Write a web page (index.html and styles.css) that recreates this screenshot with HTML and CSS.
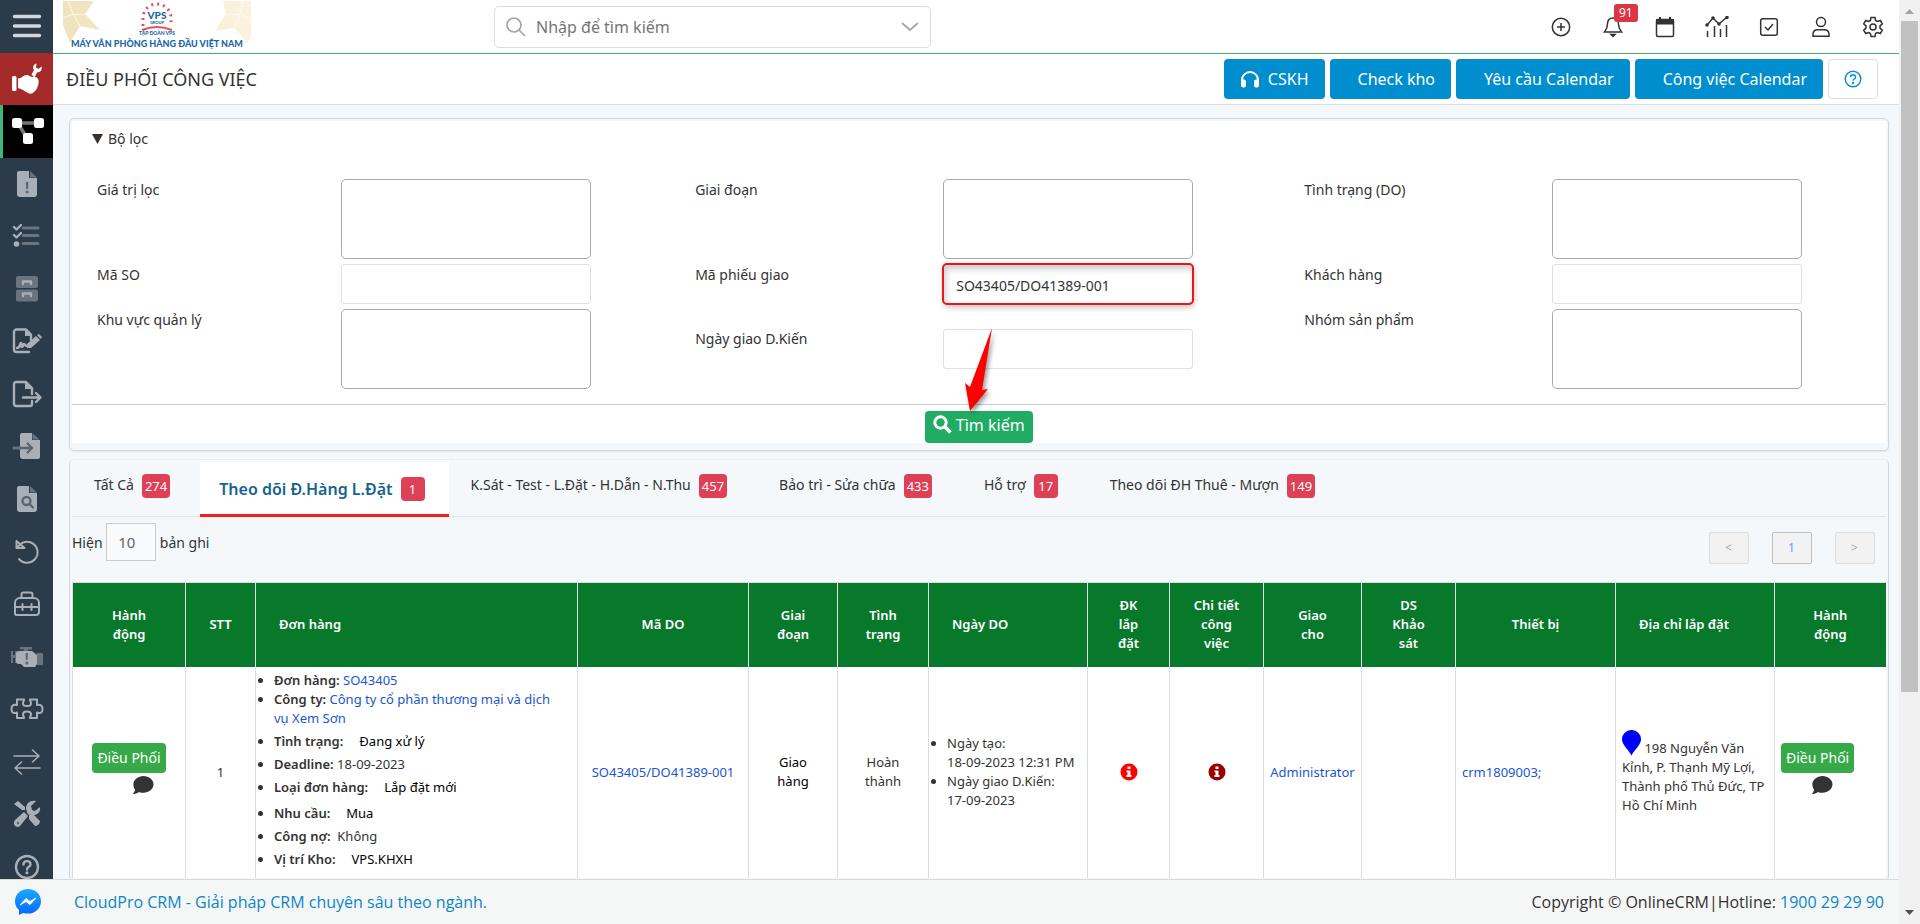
FILE: index.html
```html
<!DOCTYPE html>
<html lang="vi">
<head>
<meta charset="utf-8">
<title>Điều phối công việc</title>
<link rel="stylesheet" href="styles.css">
</head>
<body>
<div class="window">
<div class="page">
  <div class="workspace">
    <nav class="sidebar" aria-label="Menu chính">
      <div class="sidebar-list">
        <button class="side-item menu" aria-label="Menu"><svg width="30" height="26" viewBox="0 0 30 26"><path d="M2.500 3.500h25M2.500 13h25M2.500 22.500h25" stroke="#d3d6da" stroke-width="3.400" stroke-linecap="round"/></svg></button>
        <a class="side-item module" href="#" aria-label="Dịch vụ"><svg width="34" height="34" viewBox="0 0 34 34" fill="#fff"><rect x="2" y="14" width="4.500" height="15" rx="1.500"/><path d="M8 16.500c4 0 5-3.500 9-3.500 2 0 3 2 6 2 2-.5 4 .5 5 2 1.500 2 0 3.500.5 5-.5 2-1 3-1.500 4-.5 2-2 3-3 4-1.500 2-4 2-6 1-3-1.500-6-4-10-5z"/><path d="M21.500 12.500l2.500-4.500c-2-3 0-6 2.500-6.500l-.5 4 2.500 1.500 3-2.500c1 3-1 6-4.500 6l-2.500 5z"/></svg></a>
        <a class="side-item active" href="#" aria-label="Điều phối"><svg width="34" height="28" viewBox="0 0 34 28"><path d="M10 6h16M8 8l8 13" stroke="#777" stroke-width="3.500"/><g fill="#fff"><rect x="1" y="1" width="10" height="10" rx="2.500"/><rect x="23" y="1" width="10" height="10" rx="2.500"/><rect x="12" y="16" width="10" height="11" rx="2.500"/></g></svg></a>
        <a class="side-item" href="#" aria-label="Cảnh báo"><svg width="22" height="28" viewBox="0 0 22 28"><path class="p" d="M3 1h10v7h8v16a3 3 0 0 1-3 3H4a3 3 0 0 1-3-3V3a2 2 0 0 1 2-2z"/><path class="s" d="M14 1l7 6.500h-7z"/><path class="d" d="M9.800 12h2.600l-.4 7h-1.800z"/><circle class="d" cx="11.100" cy="22" r="1.500"/></svg></a>
        <a class="side-item" href="#" aria-label="Danh sách"><svg width="30" height="26" viewBox="0 0 30 26"><path class="sl" d="M11 5h15M11 12.500h15M11 20.500h15" stroke-width="3.500"/><path class="pl" d="M2 4l2.500 2.500L9 2M2 12l2.500 2.500L9 10" stroke-width="2.800"/><circle class="p" cx="4.500" cy="21" r="2.800"/></svg></a>
        <a class="side-item" href="#" aria-label="Kho"><svg width="24" height="28" viewBox="0 0 24 28"><rect class="s" x="1" y="1" width="22" height="12" rx="2"/><rect class="s" x="1" y="14.500" width="22" height="12" rx="2"/><path class="pl" d="M8 9V6.500h8V9M8 21v-2.500h8V21"/></svg></a>
        <a class="side-item" href="#" aria-label="Hợp đồng"><svg class="wide" width="30" height="28" viewBox="0 0 30 28"><path class="pl" d="M17 25H4.500A2.500 2.500 0 0 1 2 22.500V5a2.500 2.500 0 0 1 2.500-2.500H14l5 5V13M5 21c3 0 3-5 4-5s0 4 1 4 1-3 2-3 1 2 3 2"/><path class="p" d="M13 2v7h7zM15 21v-4l9-8 4 4-9 8zM25 8l2-1 3 3-1.500 2z"/></svg></a>
        <a class="side-item" href="#" aria-label="Xuất"><svg width="30" height="28" viewBox="0 0 30 28"><path class="pl" d="M20 21v3a2 2 0 0 1-2 2H4a2 2 0 0 1-2-2V4a2 2 0 0 1 2-2h10l6 6v6" stroke-width="2.600"/><path class="p" d="M13 2v7h7z"/><path class="pl" d="M11 17.500h17M24 13l4.500 4.500L24 22"/></svg></a>
        <a class="side-item" href="#" aria-label="Nhập"><svg width="30" height="28" viewBox="0 0 30 28"><path class="p" d="M10 1h10v7h8v17a2 2 0 0 1-2 2H11a3 3 0 0 1-3-3V3a2 2 0 0 1 2-2z"/><path class="s" d="M20.500 1l7 6.500h-7z"/><path class="dl" d="M8 16h12M15.500 11.500L20 16l-4.500 4.500"/><path class="sl" d="M2 16h5"/></svg></a>
        <a class="side-item" href="#" aria-label="Tra cứu"><svg width="22" height="28" viewBox="0 0 22 28"><path class="p" d="M3 1h10v7h8v16a3 3 0 0 1-3 3H4a3 3 0 0 1-3-3V3a2 2 0 0 1 2-2z"/><path class="s" d="M14 1l7 6.500h-7z"/><circle class="dl" cx="10.500" cy="16" r="4"/><path class="dl" d="M13.500 19l3.500 3.500"/></svg></a>
        <a class="side-item" href="#" aria-label="Hoàn tác"><svg width="26" height="26" viewBox="0 0 26 26"><path class="pl thin" d="M4 8A10.500 10.500 0 1 1 5 20M2.500 2v7h8L2.500 2"/></svg></a>
        <a class="side-item" href="#" aria-label="Công cụ"><svg width="28" height="26" viewBox="0 0 28 26"><path class="pl thin" d="M8.500 7V3.500a2 2 0 0 1 2-2h7a2 2 0 0 1 2 2V7M2 23V12a5 5 0 0 1 5-5h14a5 5 0 0 1 5 5v9a3 3 0 0 1-3 3H4a2 2 0 0 1-2-1zM2 16h24M9.500 13v6M18.500 13v6"/></svg></a>
        <a class="side-item" href="#" aria-label="Máy móc"><svg width="34" height="24" viewBox="0 0 34 24"><path class="s" d="M1 6h2v4h2V6h2v12H5v-5H3v5H1zM10 2h12v2.500h-4V6h-4V4.500h-4zM27 8h5a1 1 0 0 1 1 1v11h-6z"/><path class="p" d="M8 6h14l5 4v9l-2 3H14l-3-3H8a3 3 0 0 1-2-3v-7a3 3 0 0 1 2-3z"/><path class="d" d="M15.500 8h2.500l-.4 7h-1.700z"/><circle class="d" cx="16.800" cy="18" r="1.500"/></svg></a>
        <a class="side-item" href="#" aria-label="Mô-đun"><svg width="34" height="22" viewBox="0 0 34 22"><path class="pl thin" d="M7 1.500h7c0 2-1 2-1 4s1.500 2.500 4 2.500 4-.5 4-2.500-1-2-1-4h7V7c4-1 5.500 1 5.500 4S31 16 27 14.500v5.500h-7c0-2 1-2 1-3.500 0-2-1.500-3-4-3s-4 1-4 3c0 1.500 1 1.500 1 3.500H7v-5.500C3 16 1.500 14 1.500 11S3 6 7 7z"/></svg></a>
        <a class="side-item" href="#" aria-label="Chuyển đổi"><svg width="30" height="26" viewBox="0 0 30 26"><path class="pl hair" d="M2 7h25M20.500 1L27 7l-6.500 6M28 19H3M9.500 13L3 19l6.500 6"/></svg></a>
        <a class="side-item" href="#" aria-label="Sửa chữa"><svg width="28" height="28" viewBox="0 0 28 28"><path class="p" d="M1 4l4-3 7 6v3l5 5 3-1 7 7c0 3-3 5-5 5l-6-7v-4l-4-5H9zM2 20l9-8 4 4-8 10c-4 3-8-2-5-6z"/><path class="p" d="M13 9c0-6 4-9 10-8l-5 5 1 4 3 1 5-4c1 5-3 9-9 8l-3-1z"/><circle class="d" cx="5" cy="23" r="1.200"/></svg></a>
        <a class="side-item" href="#" aria-label="Trợ giúp"><svg width="26" height="26" viewBox="0 0 26 26"><circle class="pl" cx="13" cy="13" r="11"/><path class="pl" d="M9.500 10.500c0-4.500 7-4.500 7 0 0 2.500-3.500 2-3.500 5"/><circle class="p" cx="13" cy="18.800" r="1.600"/></svg></a>
      </div>
    </nav>

    <main class="main">
      <header class="topbar">
        <a class="logo" href="#" aria-label="VPS Group">
          <svg width="188" height="48" viewBox="0 0 188 48">
            <defs><linearGradient id="gold" x1="0" x2="1"><stop offset="0" stop-color="#efe2bd"/><stop offset="1" stop-color="#fbf3df"/></linearGradient></defs>
            <path fill="url(#gold)" d="M0 0h31l-9 13 15 16-20-4-10 17L0 24zM188 0h-28l3 13-11 17 20-3 12 16 4-8z"/>
            <path d="M0 17l10-4L5 0M10 13l12 1M10 13l7 12M188 18l-11-5 3-13M177 13l-14 1M177 13l-5 14" stroke="#fffaf0" fill="none"/>
            <path d="M80 25v-8a14 14 0 0 1 28 0v8" fill="none" stroke="#e05561" stroke-width="3" stroke-dasharray="2 4"/>
            <path d="M79 29q15-6 30 0" fill="none" stroke="#e05561" stroke-width="2"/>
            <g fill="#1b67a6" text-anchor="middle" font-family="Lato, sans-serif" font-weight="900">
              <text x="94" y="18" font-size="10">VPS</text><text x="94" y="23" font-size="4">GROUP</text>
              <text x="94" y="34" font-size="5">TẬP ĐOÀN VPS</text><text x="94" y="46" font-size="9">MÁY VĂN PHÒNG HÀNG ĐẦU VIỆT NAM</text>
            </g>
          </svg>
        </a>
        <div class="search">
          <svg width="20" height="20" viewBox="0 0 20 20"><circle cx="8" cy="8" r="7" fill="none" stroke="#a5a5a5" stroke-width="1.700"/><path d="M13 13l6 6" stroke="#a5a5a5" stroke-width="1.700"/></svg>
          <input type="text" aria-label="Tìm kiếm" placeholder="Nhập để tìm kiếm">
          <svg width="18" height="12" viewBox="0 0 18 12"><path d="M1 2l8 7 8-7" fill="none" stroke="#a5a5a5" stroke-width="1.800"/></svg>
        </div>
        <div class="tools">
          <button aria-label="Thêm"><svg width="22" height="22" viewBox="0 0 22 22"><circle cx="11" cy="11" r="8.700"/><path d="M11 7v8M7 11h8"/></svg></button>
          <button class="bell" aria-label="Thông báo"><svg width="22" height="22" viewBox="0 0 22 22"><path d="M11 2c-4 0-5.500 3-5.500 6 0 4-1 5.500-3 8h17c-2-2.500-3-4-3-8 0-3-1.500-6-5.500-6z"/><path d="M9 18.500h4l-2 2z" fill="#333"/></svg><span class="count">91</span></button>
          <button aria-label="Lịch"><svg width="22" height="22" viewBox="0 0 22 22"><rect x="2.500" y="3.500" width="17" height="17" rx="1.500"/><path d="M3 4h16v3.500H3zM6 1v3M16 1v3" fill="#333" stroke-width="2"/></svg></button>
          <button aria-label="Báo cáo"><svg width="24" height="22" viewBox="0 0 24 22"><path d="M2.500 21v-6M9.500 21V10M15.500 21v-8M21.500 21V9M2 9l6-7 6 6 8-7"/><g fill="#333"><circle cx="8" cy="2" r="1"/><circle cx="14" cy="8" r="1"/><circle cx="22" cy="1.500" r="1"/><circle cx="2" cy="9" r="1"/></g></svg></button>
          <button aria-label="Công việc"><svg width="22" height="22" viewBox="0 0 22 22"><rect x="2.700" y="2.700" width="16.600" height="16.600" rx="2"/><path d="M7 11l3 3 5-6"/></svg></button>
          <button aria-label="Tài khoản"><svg width="22" height="22" viewBox="0 0 22 22"><circle cx="11" cy="6" r="4.500"/><path d="M3 20.300v-2c0-3 2-4.500 5-4.500h6c3 0 5 1.500 5 4.500v2z"/></svg></button>
          <button aria-label="Cài đặt"><svg width="22" height="22" viewBox="0 0 22 22"><circle cx="11" cy="11" r="3"/><path d="M9 1.500h4l.6 3 1.800 1 2.900-1 2 3.400-2.300 2v2.200l2.300 2-2 3.400-2.900-1-1.800 1-.6 3H9l-.6-3-1.800-1-2.900 1-2-3.400 2.300-2V9.900l-2.300-2 2-3.400 2.900 1 1.800-1z"/></svg></button>
        </div>
      </header>

      <div class="titlebar">
        <h1>ĐIỀU PHỐI CÔNG VIỆC</h1>
        <div class="actions">
          <button class="blue cskh"><svg width="20" height="18" viewBox="0 0 20 18"><path d="M2 14V10a8 8 0 0 1 16 0v4" fill="none" stroke="#fff" stroke-width="2"/><rect x="1" y="9.500" width="5" height="8" rx="2" fill="#fff"/><rect x="14" y="9.500" width="5" height="8" rx="2" fill="#fff"/></svg>CSKH</button>
          <button class="blue">Check kho</button>
          <button class="blue">Yêu cầu Calendar</button>
          <button class="blue">Công việc Calendar</button>
          <button class="help" aria-label="Trợ giúp"><svg width="18" height="18" viewBox="0 0 18 18" fill="none" stroke="#0b8fd0" stroke-width="1.500"><circle cx="9" cy="9" r="7.800"/><path d="M6.500 7.300c0-3.300 5-3.300 5 0 0 1.700-2.500 1.700-2.500 3.400"/><circle cx="9" cy="13" r=".5"/></svg></button>
        </div>
      </div>

      <div class="content">
        <section class="panel filter">
          <details open>
            <summary><svg width="11" height="10" viewBox="0 0 11 10"><path d="M0 0h11L5.500 10z" fill="#333"/></svg>Bộ lọc</summary>
            <form class="fields" id="filter">
              <label for="f1">Giá trị lọc</label><div><textarea id="f1"></textarea></div>
              <label for="f2">Giai đoạn</label><div><textarea id="f2"></textarea></div>
              <label for="f3">Tình trạng (DO)</label><div><textarea id="f3"></textarea></div>
              <label for="f4">Mã SO</label><div><input id="f4" type="text"></div>
              <label for="f5">Mã phiếu giao</label><div class="marked"><input id="f5" type="text" value="SO43405/DO41389-001"></div>
              <label for="f6">Khách hàng</label><div><input id="f6" type="text"></div>
              <label for="f7">Khu vực quản lý</label><div><textarea id="f7"></textarea></div>
              <label class="mid" for="f8">Ngày giao D.Kiến</label><div class="mid"><input id="f8" type="text"></div>
              <label for="f9">Nhóm sản phẩm</label><div><textarea id="f9"></textarea></div>
            </form>
            <div class="submit">
              <button class="find" type="submit" form="filter"><svg width="19" height="19" viewBox="0 0 19 19"><circle cx="7.500" cy="7.500" r="5.700" fill="none" stroke="#fff" stroke-width="3"/><path d="M11.500 11.500l6 6" stroke="#fff" stroke-width="3.600"/></svg>Tìm kiếm</button>
              <svg class="arrow" width="40" height="90" viewBox="0 0 40 90"><path d="M33 2L23 64l6-1L11 85 6 57l5 4z" fill="red"/></svg>
            </div>
          </details>
        </section>

        <section class="panel results">
          <div class="tabs">
            <button>Tất Cả<span class="badge">274</span></button>
            <button class="current">Theo dõi Đ.Hàng L.Đặt<span class="badge">1</span></button>
            <button>K.Sát - Test - L.Đặt - H.Dẫn - N.Thu<span class="badge">457</span></button>
            <button>Bảo trì - Sửa chữa<span class="badge">433</span></button>
            <button>Hỗ trợ<span class="badge">17</span></button>
            <button>Theo dõi ĐH Thuê - Mượn<span class="badge">149</span></button>
          </div>
          <div class="listbar">
            <label class="length">Hiện <input type="text" value="10"> bản ghi</label>
            <div class="pager"><button disabled>&lt;</button><button class="on">1</button><button disabled>&gt;</button></div>
          </div>
          <table class="grid">
            <colgroup><col class="c1"><col class="c2"><col class="c3"><col class="c4"><col class="c5"><col class="c6"><col class="c7"><col class="c8"><col class="c9"><col class="c10"><col class="c11"><col class="c12"><col class="c13"><col class="c14"></colgroup>
            <thead><tr>
              <th>Hành<br>động</th><th>STT</th><th class="left">Đơn hàng</th><th>Mã DO</th><th>Giai<br>đoạn</th><th>Tình<br>trạng</th><th class="left">Ngày DO</th><th>ĐK<br>lắp<br>đặt</th><th>Chi tiết<br>công<br>việc</th><th>Giao<br>cho</th><th>DS<br>Khảo<br>sát</th><th>Thiết bị</th><th class="left">Địa chỉ lắp đặt</th><th>Hành<br>động</th>
            </tr></thead>
            <tbody><tr>
              <td><button class="assign">Điều Phối</button><svg class="chat first" width="22" height="18" viewBox="0 0 22 18"><path d="M11.500 0C17 0 21.500 3.700 21.500 8.300s-4.500 8.500-10 8.500c-1.700 0-3.200-.3-4.600-.9C5.300 17.200 3 18 .8 18c1.200-1.200 2-2.800 2.200-4.300-1-1.500-1.600-3.400-1.600-5.400C1.400 3.700 6 0 11.500 0z" fill="#333"/></svg></td>
              <td>1</td>
              <td class="order"><ul>
                <li><b>Đơn hàng:</b> <a href="#">SO43405</a></li>
                <li><b>Công ty:</b> <a href="#">Công ty cổ phần thương mại và dịch vụ Xem Sơn</a></li>
                <li class="pick"><b>Tình trạng:</b><span>Đang xử lý</span></li>
                <li class="plain"><b>Deadline:</b> 18-09-2023</li>
                <li class="pick"><b>Loại đơn hàng:</b><span>Lắp đặt mới</span></li>
                <li class="pick"><b>Nhu cầu:</b><span>Mua</span></li>
                <li class="plain"><b>Công nợ:</b>&nbsp; Không</li>
                <li class="pick"><b>Vị trí Kho:</b><span>VPS.KHXH</span></li>
              </ul></td>
              <td><a href="#">SO43405/DO41389-001</a></td>
              <td class="black">Giao<br>hàng</td>
              <td>Hoàn<br>thành</td>
              <td class="dates"><ul><li>Ngày tạo:<br>18-09-2023 12:31 PM</li><li>Ngày giao D.Kiến:<br>17-09-2023</li></ul></td>
              <td><svg width="18" height="18" viewBox="0 0 18 18"><circle cx="9" cy="9" r="8.500" fill="red"/><path d="M7.500 3.500h3v2.500h-3zM6.500 7.500h4V12h1v2h-5v-2h1V9.300h-1z" fill="#fff"/></svg></td>
              <td><svg width="18" height="18" viewBox="0 0 18 18"><circle cx="9" cy="9" r="8.500" fill="#900"/><path d="M7.500 3.500h3v2.500h-3zM6.500 7.500h4V12h1v2h-5v-2h1V9.300h-1z" fill="#fff"/></svg></td>
              <td><a href="#">Administrator</a></td>
              <td></td>
              <td class="start"><a href="#">crm1809003;</a></td>
              <td class="start"><svg class="pin" width="19" height="26" viewBox="0 0 19 26"><path d="M9.500 0A9.300 9.300 0 0 1 19 9.500C19 15 12 20 9.500 25.500 7 20 0 15 0 9.500A9.300 9.300 0 0 1 9.500 0z" fill="#00f"/></svg> 198 Nguyễn Văn Kỉnh, P. Thạnh Mỹ Lợi, Thành phố Thủ Đức, TP Hồ Chí Minh</td>
              <td class="start"><button class="assign">Điều Phối</button><svg class="chat last" width="22" height="18" viewBox="0 0 22 18"><path d="M11.500 0C17 0 21.500 3.700 21.500 8.300s-4.500 8.500-10 8.500c-1.700 0-3.200-.3-4.600-.9C5.300 17.200 3 18 .8 18c1.200-1.200 2-2.800 2.200-4.300-1-1.500-1.600-3.400-1.600-5.400C1.400 3.700 6 0 11.500 0z" fill="#333"/></svg></td>
            </tr></tbody>
          </table>
        </section>
      </div>
    </main>
  </div>

  <footer class="footer">
    <svg width="26" height="26" viewBox="0 0 26 26"><defs><linearGradient id="msg" x2="0" y2="1"><stop stop-color="#18aaff"/><stop offset="1" stop-color="#0a66ff"/></linearGradient></defs><path d="M13 0C5.700 0 0 5.200 0 12.200c0 3.800 1.500 6.600 4 8.800V26l4-2c1.600.4 3.300.6 5 .6 7.300 0 13-5.300 13-12.400S20.300 0 13 0z" fill="url(#msg)"/><path d="M5 16l6-6.500 4 3 6-3.500-6 6.500-4-3z" fill="#fff" stroke="#fff"/></svg>
    <a href="#">CloudPro CRM - Giải pháp CRM chuyên sâu theo ngành.</a>
    <p>Copyright © OnlineCRM|Hotline: <a href="#">1900 29 29 90</a></p>
  </footer>
</div>
<div class="scroll" aria-hidden="true">
  <svg width="21" height="21" viewBox="0 0 21 21"><path d="M6 14h9l-4.500-5z" fill="#a3a3a3"/></svg>
  <div class="thumb"></div>
  <svg width="21" height="21" viewBox="0 0 21 21"><path d="M6 7h9l-4.500 5z" fill="#505050"/></svg>
</div>
</div>
</body>
</html>
```

FILE: styles.css
```css
* { box-sizing: border-box; }
body {
  margin: 0;
  font: 14px/20px "Noto Sans", "Open Sans", sans-serif;
  color: #333;
  background: #f4f8fb;
}
a { text-decoration: none; color: #0b86c6; }
button, input, textarea { font: inherit; color: inherit; margin: 0; }
svg { display: block; flex: none; }

.window { display: flex; height: 100vh; overflow: hidden; }
.page { flex: 1; min-width: 0; display: flex; flex-direction: column; }
.workspace { flex: 1; min-height: 0; display: flex; overflow: hidden; }

/* Left menu */
.sidebar { flex: none; width: 53px; background: #2c3b49; overflow: hidden; }
.sidebar-list { display: grid; grid-auto-rows: 1fr; height: 893px; }
.side-item {
  display: flex;
  align-items: center;
  justify-content: center;
  border: 0;
  padding: 0;
  background: none;
}
.side-item.module { background: #a52a2a; }
.side-item.active { background: #000; border-left: 3px solid #3cb878; }
.p { fill: #a9afb6; }
.s { fill: #69747f; }
.d { fill: #5c6772; }
.pl, .sl, .dl { fill: none; stroke: #a9afb6; stroke-width: 2.400; stroke-linejoin: round; stroke-linecap: round; }
.sl { stroke: #69747f; stroke-width: 3; }
.dl { stroke: #5c6772; }
.thin { stroke-width: 2; }
.hair { stroke-width: 1.500; }

.main { flex: 1; min-width: 0; }

/* Header */
.topbar {
  display: flex;
  align-items: center;
  height: 54px;
  padding: 0 14px 0 10px;
  background: #fff;
  border-bottom: 1px solid #3cb371;
}
.logo { margin-bottom: 4px; }
.search {
  display: flex;
  align-items: center;
  gap: 10px;
  width: 437px;
  height: 42px;
  margin-left: 243px;
  padding: 0 11px;
  border: 1px solid #ddd;
  border-radius: 5px;
}
.search input { flex: 1; min-width: 0; border: 0; padding: 0; font-size: 16px; outline: 0; }
.search input::placeholder { color: #757575; opacity: 1; }
.tools { display: flex; gap: 28px; margin-left: auto; }
.tools button { position: relative; width: 24px; border: 0; padding: 0; background: none; display: flex; justify-content: center; }
.tools svg { fill: none; stroke: #333; stroke-width: 1.500; }
.count {
  position: absolute;
  left: 13px;
  top: -12px;
  padding: 0 5px;
  font-size: 12px;
  line-height: 18px;
  color: #fff;
  background: #dc3545;
  border-radius: 3px;
}

.titlebar {
  display: flex;
  align-items: center;
  justify-content: space-between;
  height: 51px;
  padding: 0 21px 0 13px;
  background: #fff;
  border-bottom: 1px solid #ddd;
}
h1 { margin: 0; font-size: 18px; line-height: 24px; font-weight: 400; }
.actions { display: flex; gap: 5px; }
.actions button { height: 40px; border-radius: 4px; }
.blue { padding: 0 16px 0 28px; border: 0; color: #fff; background: #008ecf; font-size: 16px; }
.actions .cskh { display: flex; align-items: center; gap: 8px; padding: 0 16px; }
.help { width: 50px; padding: 0 15px; border: 1px solid #ddd; background: #fff; }

/* Panels */
.content { display: grid; gap: 8px; padding: 13px 12px 0 16px; }
.panel { border: 1px solid #d3d6d8; border-radius: 5px; padding: 2px; }
.filter { padding-bottom: 7px; box-shadow: 0 1px 2px #0001; }
details { background: #fff; }
summary { display: flex; align-items: center; gap: 5px; padding: 8px 20px; list-style: none; }
.fields {
  display: grid;
  grid-template-columns: 244fr 354fr 248fr 361fr 248fr 333fr;
  row-gap: 5px;
  padding: 22px 0 15px 25px;
}
.fields > div { display: flex; }
.fields label { padding-top: 1px; }
.fields textarea, .fields input {
  width: 250px;
  border: 1px solid #aaa;
  border-radius: 5px;
  background: #fff;
  resize: none;
}
.fields textarea { height: 80px; }
.fields input { height: 40px; padding: 2px 12px 0; border: 1px solid #e0e0e0; border-radius: 3px; }
.fields .mid { padding-top: 20px; }
.fields .marked input {
  outline: 2px solid #f01418;
  outline-offset: -1px;
  border-radius: 4px;
  box-shadow: 1px 3px 6px #0004, inset 2px 4px 6px #0003;
}
.submit { position: relative; display: flex; justify-content: center; padding-top: 6px; border-top: 1px solid #ccc; }
.find {
  display: flex;
  gap: 4px;
  height: 32px;
  padding: 4px 8px;
  border: 0;
  border-radius: 4px;
  color: #fff;
  background: #22ab63;
  font-size: 16px;
}
.arrow { position: absolute; left: calc(50% - 20px); top: -79px; filter: drop-shadow(2px 3px 2px #0006); }

/* Tabs */
.results { border-top-color: #e9edf0; }
.tabs { display: flex; height: 55px; border-bottom: 1px solid #dfe2e4; }
.tabs button { display: flex; align-items: flex-start; gap: 8px; height: 55px; padding: 11px 30px 0 22px; border: 0; background: none; line-height: 24px; }
.tabs button:not(.current) .badge { margin-top: 1px; }
.badge { padding: 0 3px; min-width: 24px; font-size: 13px; line-height: 24px; color: #fff; background: #de4058; border-radius: 4px; font-weight: 400; }
.tabs .current { padding: 15px 24px 0 19px; font-size: 16px; font-weight: 600; color: #17638f; background: #fff; border-bottom: 3px solid #fb1d1d; }

.listbar { display: flex; justify-content: space-between; height: 65px; padding: 6px 11px 0 0; }
.length input { width: 50px; height: 38px; padding: 0 11px; border: 1px solid #ccc; background: #f8fafc; color: #666; font-size: 15px; }
.pager { display: flex; gap: 23px; padding-top: 9px; }
.pager button { width: 40px; height: 32px; padding: 0; border: 1px solid #ddd; background: #f2f2f2; color: #aaa; font-size: 12px; border-radius: 2px; }
.pager .on { color: #7a90f5; border-color: #c0c0c0; }

/* Orders table */
.grid { width: 100%; table-layout: fixed; border-collapse: collapse; font-size: 13px; line-height: 19px; background: #fff; }
.grid th { height: 84px; padding: 0 8px; color: #fff; background: #08782b; font-weight: 600; border: 1px solid #ddd; border-width: 1px 1px 0; }
.grid th:last-child, .grid td:last-child { border-right: 0; }
.grid .left { text-align: left; padding-left: 23px; }
.grid td { height: 211px; padding: 0 6px; text-align: center; vertical-align: middle; border: 1px solid #ddd; border-width: 0 1px; }
.grid td a { color: #1a56d0; }
.grid td svg { margin: 0 auto; }
.grid .black { color: #000; }
.grid .start, .grid .order, .grid .dates { text-align: left; }
.grid .order { padding: 4px 12px 0 18px; vertical-align: top; }
.grid .dates { padding: 0 4px 0 18px; }
.grid ul { margin: 0; padding: 0; }
.grid b { font-weight: 600; }
.pick { line-height: 26px; }
.pick span { margin-left: 16px; color: #000; }
.plain { line-height: 20px; }
.c1 { width: 113px; } .c2 { width: 70px; } .c3 { width: 322px; } .c4 { width: 171px; }
.c5 { width: 89px; } .c6 { width: 91px; } .c7 { width: 159px; } .c8 { width: 82px; }
.c9 { width: 94px; } .c10 { width: 98px; } .c11 { width: 94px; } .c12 { width: 160px; }
.c13 { width: 159px; } .c14 { width: 111px; }
.assign { height: 30px; padding: 0 5px; border: 0; border-radius: 4px; color: #fff; background: #36a949; font-size: 14px; white-space: nowrap; }
.grid .chat { margin-top: 3px; margin-bottom: 8px; }
.grid .first { margin-left: 53px; }
.grid .last { margin-left: 30px; }
.grid .pin { display: inline-block; vertical-align: -3px; }

/* Footer */
.footer {
  display: flex;
  align-items: center;
  height: 45px;
  padding: 0 15px;
  border-top: 1px solid #d8dadb;
  background: #f5f7f7;
  font-family: "Open Sans", "Noto Sans", sans-serif;
  font-size: 16px;
}
.footer > a { margin-left: 33px; }
.footer p { margin: 0 0 0 auto; }

/* Scrollbar */
.scroll { flex: none; display: flex; flex-direction: column; width: 21px; background: #f1f1f1; }
.thumb { width: 17px; height: 671px; margin: 0 auto auto; background: #c1c1c1; }
```
